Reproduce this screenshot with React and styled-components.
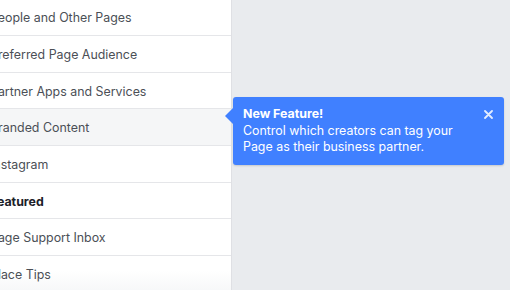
import styled, { createGlobalStyle } from "styled-components";

const GlobalStyle = createGlobalStyle`
  html, body {
    margin: 0;
    padding: 0;
    background: #e9ebee;
    overflow: hidden;
  }
  body {
    font-family: Inter, "Liberation Sans", Arial, sans-serif;
    -webkit-font-smoothing: antialiased;
  }
`;

const items = [
  { label: "People and Other Pages" },
  { label: "Preferred Page Audience" },
  { label: "Partner Apps and Services" },
  { label: "Branded Content", active: true },
  { label: "Instagram" },
  { label: "Featured", bold: true },
  { label: "Page Support Inbox" },
  { label: "Place Tips", fade: true },
];

function App() {
  return (
    <>
      <GlobalStyle />
      <Page>
        <Sidebar>
          {items.map((item) => (
            <Row key={item.label} $active={item.active} $bold={item.bold} $fade={item.fade}>
              {item.label}
            </Row>
          ))}
        </Sidebar>
        <Main>
          <Tooltip>
            <Arrow />
            <TipText>
              <TipTitle>New Feature!</TipTitle>
              Control which creators can tag your Page as their business partner.
            </TipText>
            <Close aria-label="Close">
              <svg width="9" height="9" viewBox="0 0 9 9">
                <path d="M1 1 L8 8 M8 1 L1 8" stroke="#ffffff" strokeOpacity="0.85" strokeWidth="1.8" strokeLinecap="round" />
              </svg>
            </Close>
          </Tooltip>
        </Main>
      </Page>
    </>
  );
}

export default App;

const Page = styled.div`
  display: flex;
  height: 290px;
  width: 510px;
  overflow: hidden;
`;

const Sidebar = styled.ul`
  list-style: none;
  margin: -0.5px 0 0 -10px;
  padding: 0;
  width: 242px;
  flex-shrink: 0;
  background: #ffffff;
  border-right: 1px solid #dfe0e4;
  box-sizing: border-box;
`;

const Row = styled.li`
  height: 36.67px;
  box-sizing: border-box;
  display: flex;
  align-items: center;
  padding-top: 1px;
  border-bottom: 1px solid #e5e6e9;
  font-size: 12.4px;
  color: ${(p) => (p.$bold ? "#1d2129" : "#4b4f56")};
  font-weight: ${(p) => (p.$bold ? 700 : 400)};
  background: ${(p) =>
    p.$active ? "#f5f6f7" : p.$fade ? "linear-gradient(#ffffff 40%, #f6f7f8)" : "#ffffff"};
`;

const Main = styled.div`
  flex: 1;
  padding: 97px 0 0 1px;
`;

const Tooltip = styled.div`
  position: relative;
  width: 271px;
  box-sizing: border-box;
  background: #4080ff;
  border-radius: 3px;
  padding: 9px 30px 9px 10px;
  box-shadow: 0 1px 2px rgba(0, 0, 0, 0.15);
`;

const Arrow = styled.span`
  position: absolute;
  left: -8px;
  top: 11px;
  width: 0;
  height: 0;
  border-top: 8px solid transparent;
  border-bottom: 8px solid transparent;
  border-right: 8px solid #4080ff;
`;

const TipText = styled.div`
  color: #ffffff;
  font-size: 12.4px;
  line-height: 16.5px;
`;

const TipTitle = styled.div`
  font-weight: 700;
`;

const Close = styled.button`
  position: absolute;
  top: 13px;
  right: 11px;
  padding: 0;
  border: 0;
  background: none;
  display: flex;
`;
